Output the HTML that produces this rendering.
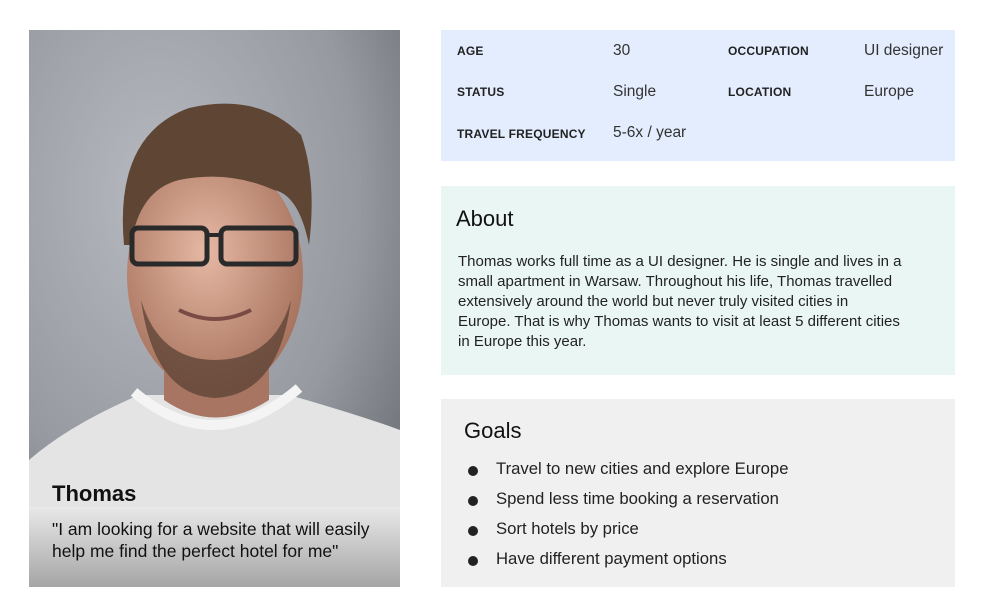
<!DOCTYPE html>
<html><head><meta charset="utf-8"><style>
body{margin:0;width:991px;height:616px;background:#fff;font-family:"Liberation Sans",sans-serif;position:relative;overflow:hidden;color:#222}
.abs{position:absolute}
.photo{left:29px;top:30px;width:371px;height:557px;overflow:hidden}
.info{left:441px;top:30px;width:514px;height:131px;background:#e3edfd}
.lab{position:absolute;font-size:12px;font-weight:bold;color:#222;letter-spacing:.2px}
.val{position:absolute;font-size:15.5px;color:#333}
.about{left:441px;top:186px;width:514px;height:189px;background:#eaf6f3}
.goals{left:441px;top:399px;width:514px;height:188px;background:#f0f0f0}
h2{margin:0;font-weight:normal;font-size:22px;position:absolute;color:#111}
.about p{position:absolute;left:17px;top:66px;margin:0;font-size:15px;line-height:20px;white-space:nowrap;color:#222}
.g{position:absolute;left:55px;font-size:16.7px;color:#222}
.g:before{content:"";position:absolute;left:-28px;top:7px;width:10px;height:10px;border-radius:50%;background:#222}
</style></head><body>
<div class="abs photo">
<svg width="371" height="557" viewBox="0 0 371 557">
<defs>
<radialGradient id="bg" cx="0.35" cy="0.3" r="0.9"><stop offset="0" stop-color="#b6b9bf"/><stop offset="0.6" stop-color="#969aa0"/><stop offset="1" stop-color="#62666b"/></radialGradient>
<radialGradient id="sk" cx="0.45" cy="0.4" r="0.6"><stop offset="0" stop-color="#e6b8a3"/><stop offset="1" stop-color="#a7735e"/></radialGradient>
<linearGradient id="cap" x1="0" y1="0" x2="0" y2="1"><stop offset="0" stop-color="#e9e9e9"/><stop offset="1" stop-color="#9a9a9a"/></linearGradient>
</defs>
<rect width="371" height="557" fill="url(#bg)"/>
<path d="M0 430 Q40 395 110 365 L260 365 Q330 385 371 400 L371 557 L0 557Z" fill="#e4e4e4"/>
<path d="M105 362 Q186 430 270 358" fill="none" stroke="#f4f4f4" stroke-width="10"/>
<path d="M135 300 L135 370 Q186 405 240 370 L240 300Z" fill="#a77562"/>
<ellipse cx="186" cy="245" rx="88" ry="118" fill="url(#sk)"/>
<path d="M112 270 Q125 365 186 368 Q250 365 262 270 Q245 330 186 330 Q130 330 112 270Z" fill="#5a4234" opacity=".75"/>
<path d="M95 215 Q85 105 160 78 Q230 62 272 105 Q288 150 280 215 Q270 165 245 160 Q200 140 150 150 Q110 160 102 215Z" fill="#5e4534"/>
<rect x="103" y="198" width="75" height="36" rx="6" fill="none" stroke="#2a2a2a" stroke-width="5"/>
<rect x="192" y="198" width="75" height="36" rx="6" fill="none" stroke="#2a2a2a" stroke-width="5"/>
<path d="M178 205 L192 205" stroke="#2a2a2a" stroke-width="4"/>
<path d="M150 280 Q186 298 222 280" fill="none" stroke="#7a4a44" stroke-width="4"/>
<rect x="0" y="477" width="371" height="80" fill="url(#cap)" opacity=".85"/>
<text x="23" y="471" font-family="Liberation Sans" font-size="22" font-weight="bold" fill="#111">Thomas</text>
<text x="23" y="505" font-family="Liberation Sans" font-size="17.5" fill="#111">"I am looking for a website that will easily</text>
<text x="23" y="527" font-family="Liberation Sans" font-size="17.5" fill="#111">help me find the perfect hotel for me"</text>
</svg></div>
<div class="abs info">
<div class="lab" style="left:16px;top:14px">AGE</div><div class="val" style="left:172px;top:12px">30</div>
<div class="lab" style="left:287px;top:14px">OCCUPATION</div><div class="val" style="left:423px;top:12px">UI designer</div>
<div class="lab" style="left:16px;top:55px">STATUS</div><div class="val" style="left:172px;top:53px">Single</div>
<div class="lab" style="left:287px;top:55px">LOCATION</div><div class="val" style="left:423px;top:53px">Europe</div>
<div class="lab" style="left:16px;top:97px">TRAVEL FREQUENCY</div><div class="val" style="left:172px;top:94px">5-6x / year</div>
</div>
<div class="abs about"><h2 style="left:15px;top:20px">About</h2>
<p>Thomas works full time as a UI designer. He is single and lives in a<br>small apartment in Warsaw. Throughout his life, Thomas travelled<br>extensively around the world but never truly visited cities in<br>Europe. That is why Thomas wants to visit at least 5 different cities<br>in Europe this year.</p></div>
<div class="abs goals"><h2 style="left:23px;top:19px">Goals</h2>
<div class="g" style="top:60px">Travel to new cities and explore Europe</div>
<div class="g" style="top:90px">Spend less time booking a reservation</div>
<div class="g" style="top:120px">Sort hotels by price</div>
<div class="g" style="top:150px">Have different payment options</div>
</div>
</body></html>
